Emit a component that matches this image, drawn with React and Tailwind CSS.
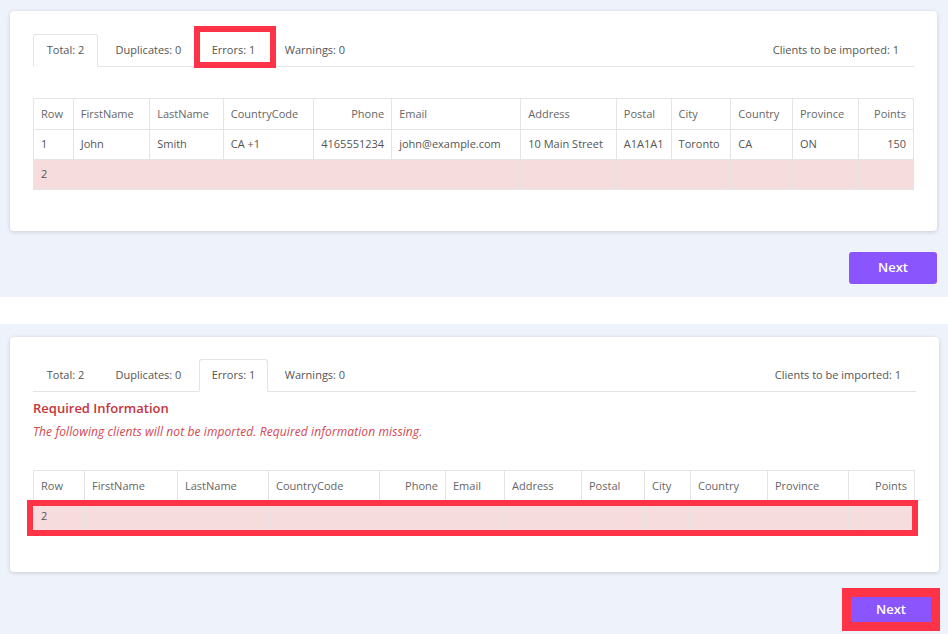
// Import preview — two states: "Total" tab and "Errors" tab.

const topCols = [
    { label: 'Row', w: 40 },
    { label: 'FirstName', w: 77 },
    { label: 'LastName', w: 74 },
    { label: 'CountryCode', w: 91 },
    { label: 'Phone', w: 78, right: true },
    { label: 'Email', w: 130 },
    { label: 'Address', w: 96 },
    { label: 'Postal', w: 51 },
    { label: 'City', w: 60 },
    { label: 'Country', w: 62 },
    { label: 'Province', w: 66 },
    { label: 'Points', w: 56, right: true },
];

const bottomCols = [
    { label: 'Row', w: 51 },
    { label: 'FirstName', w: 93 },
    { label: 'LastName', w: 91 },
    { label: 'CountryCode', w: 111 },
    { label: 'Phone', w: 66, right: true },
    { label: 'Email', w: 59 },
    { label: 'Address', w: 77 },
    { label: 'Postal', w: 63 },
    { label: 'City', w: 46 },
    { label: 'Country', w: 77 },
    { label: 'Province', w: 81 },
    { label: 'Points', w: 66, right: true },
];

const john = ['1', 'John', 'Smith', 'CA +1', '4165551234', 'john@example.com', '10 Main Street', 'A1A1A1', 'Toronto', 'CA', 'ON', '150'];

const tabs = [
    { label: 'Total: 2', w: 65 },
    { label: 'Duplicates: 0', w: 101 },
    { label: 'Errors: 1', w: 69 },
    { label: 'Warnings: 0', w: 94 },
];

function Tabs({ active, highlight }) {
    return (
        <div className="relative flex h-[33px] items-stretch border-b border-[#e2e4e8]">
            {tabs.map((tab, i) => (
                <div
                    key={tab.label}
                    style={{ width: tab.w }}
                    className={
                        i === active
                            ? '-mb-px flex items-center justify-center rounded-t-[3px] border border-[#e2e4e8] border-b-white bg-white'
                            : 'flex items-center justify-center'
                    }
                >
                    {tab.label}
                </div>
            ))}
            <div className="ml-auto flex items-center pr-[15px]">Clients to be imported: 1</div>
            {highlight && (
                <div className="absolute left-[161px] top-[-8px] h-[42px] w-[82px] border-[6px] border-[#ff3347]" />
            )}
        </div>
    );
}

function Table({ cols, rows }) {
    return (
        <table className="table-fixed border-collapse">
            <colgroup>
                {cols.map((c) => (
                    <col key={c.label} style={{ width: c.w }} />
                ))}
            </colgroup>
            <thead>
                <tr>
                    {cols.map((c) => (
                        <th
                            key={c.label}
                            className={`h-[31px] border border-[#e4e4e4] px-[7px] font-normal text-[#666] ${c.right ? 'text-right' : 'text-left'}`}
                        >
                            {c.label}
                        </th>
                    ))}
                </tr>
            </thead>
            <tbody>
                {rows.map((row, r) => (
                    <tr key={r} className={row.error ? 'bg-[#f7dcdd]' : 'bg-white'}>
                        {cols.map((c, i) => (
                            <td
                                key={c.label}
                                className={`h-[30px] border border-[#e4e4e4] px-[7px] whitespace-nowrap ${c.right ? 'text-right' : 'text-left'}`}
                            >
                                {row.cells[i] ?? ''}
                            </td>
                        ))}
                    </tr>
                ))}
            </tbody>
        </table>
    );
}

export default function App() {
    return (
        <div className="h-[634px] w-[948px] overflow-hidden bg-white font-['Open_Sans',sans-serif] text-[11px] text-[#555]">
            {/* ---------- ESTADO 1: TOTAL ---------- */}
            <section className="h-[297px] bg-[#eef2fa] pl-[10px] pt-[11px]">
                <div className="h-[220px] w-[927px] rounded-[4px] bg-white px-[23px] pt-[23px] shadow-[0_1px_4px_rgba(0,0,0,0.16)]">
                    <Tabs active={0} highlight />
                    <div className="mt-[31px]">
                        <Table cols={topCols} rows={[{ cells: john }, { cells: ['2'], error: true }]} />
                    </div>
                </div>
                <div className="mt-[21px] flex w-[927px] justify-end">
                    <button className="h-[32px] w-[88px] rounded-[3px] bg-[#8b55fd] text-[13px] font-semibold text-white">
                        Next
                    </button>
                </div>
            </section>

            <div className="h-[27px]" />

            {/* ---------- ESTADO 2: ERRORES ---------- */}
            <section className="h-[310px] bg-[#eef2fa] pl-[10px] pt-[13px]">
                <div className="h-[235px] w-[929px] rounded-[4px] bg-white px-[23px] pt-[22px] shadow-[0_1px_4px_rgba(0,0,0,0.16)]">
                    <Tabs active={2} />
                    <div className="mt-[7px] text-[13px] font-semibold leading-[18px] text-[#c4343c]">
                        Required Information
                    </div>
                    <div className="mt-[7px] text-[12px] italic leading-[16px] tracking-[0.1px] text-[#d3474f]">
                        The following clients will not be imported. Required information missing.
                    </div>
                    <div className="relative mt-[30px]">
                        <Table cols={bottomCols} rows={[{ cells: ['2'], error: true }]} />
                        <div className="absolute left-[-6px] top-[30px] h-[36px] w-[891px] border-[6px] border-[#ff3347]" />
                    </div>
                </div>
                <div className="mt-[16px] flex w-[930px] justify-end">
                    <div className="border-[9px] border-[#ff3347]">
                        <button className="block h-[25px] w-[80px] bg-[#8b55fd] text-[13px] font-semibold text-white">
                            Next
                        </button>
                    </div>
                </div>
            </section>
        </div>
    );
}
